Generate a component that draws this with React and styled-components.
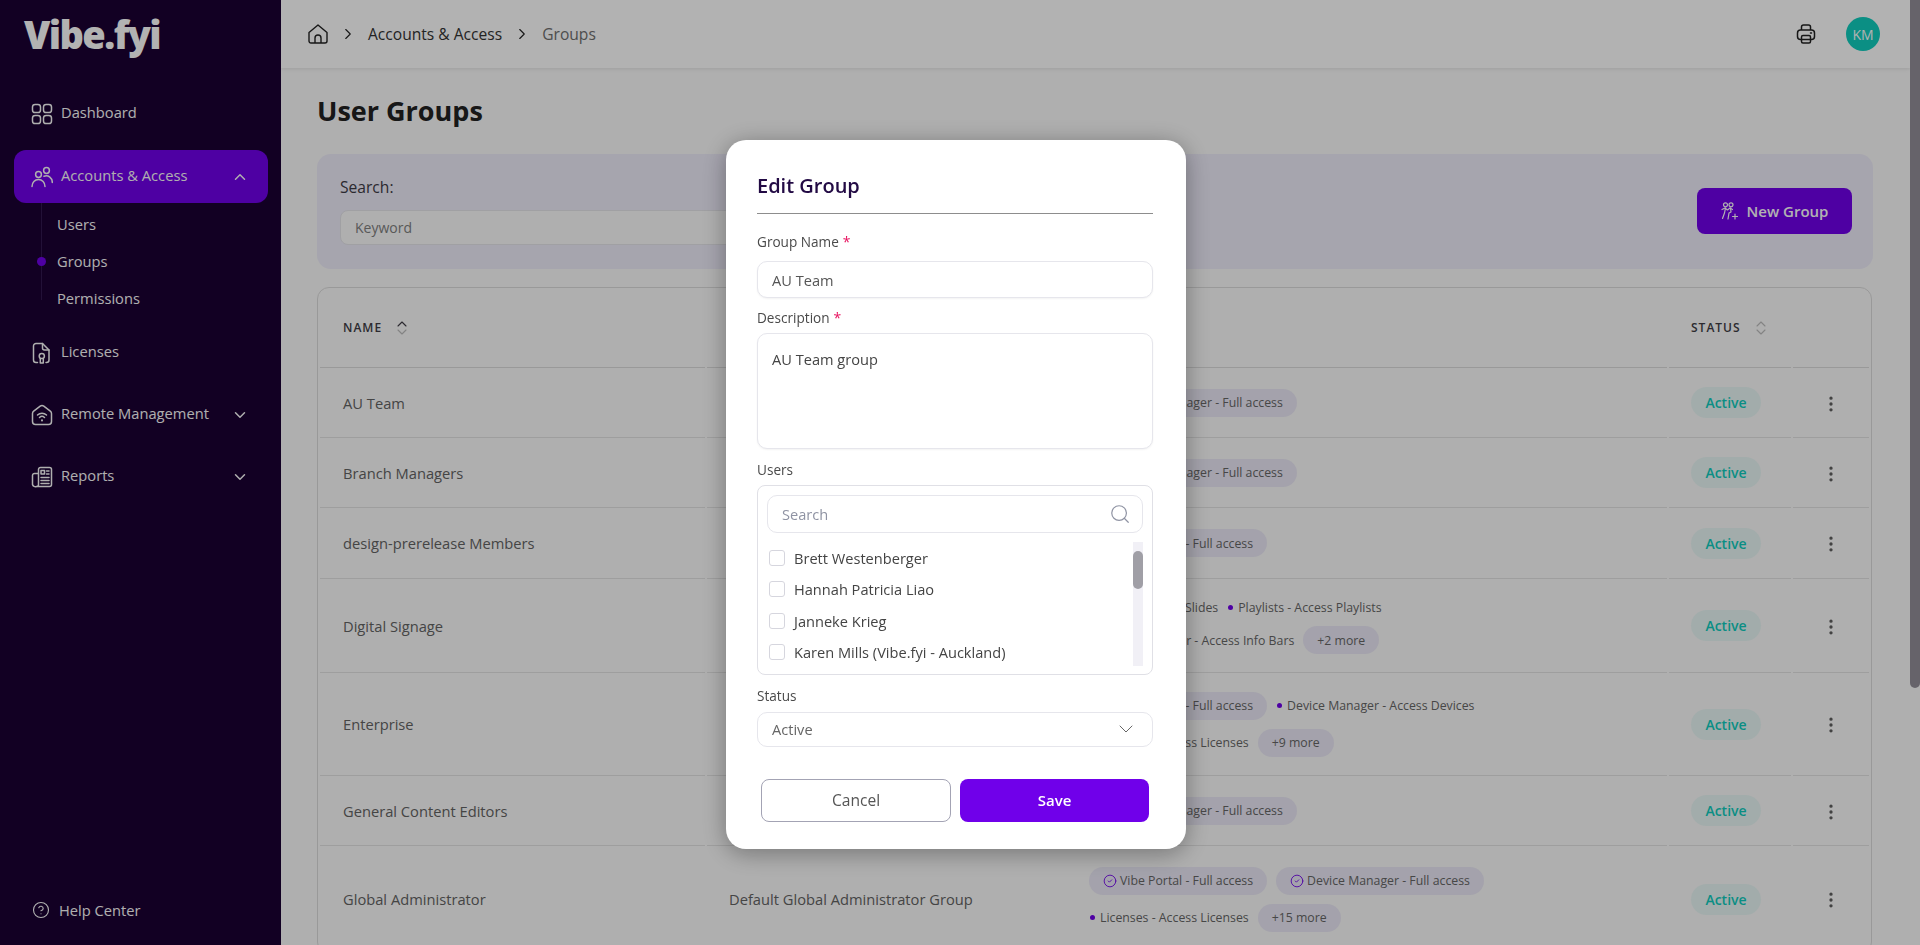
import React from 'react';
import styled, { createGlobalStyle } from 'styled-components';
import { ChevronDown, ChevronRight, ChevronUp, CircleCheck, CircleHelp, EllipsisVertical, Search } from 'lucide-react';

const GlobalStyle = createGlobalStyle`
  * { box-sizing: border-box; }
  html, body { margin: 0; height: 100%; overflow: hidden; }
  body {
    font-family: "Open Sans", "Noto Sans", sans-serif;
    font-size: 14px;
    color: #333;
    background: #fbfbfb;
  }
`;

function DashboardIcon() {
  return (
    <svg width="22" height="22" viewBox="0 0 22 22" fill="none" stroke="currentColor" strokeWidth="1.5">
      <rect x="1.5" y="1.5" width="8" height="8" rx="2.6" />
      <rect x="12.5" y="1.5" width="8" height="8" rx="2.6" />
      <rect x="1.5" y="12.5" width="8" height="8" rx="2.6" />
      <rect x="12.5" y="12.5" width="8" height="8" rx="2.6" />
    </svg>
  );
}

function PeopleIcon() {
  return (
    <svg width="22" height="22" viewBox="0 0 22 22" fill="none" stroke="currentColor" strokeWidth="1.5" strokeLinecap="round">
      <circle cx="7.5" cy="8.5" r="2.9" />
      <circle cx="15.5" cy="4.5" r="2.9" />
      <path d="M1 20.5c0-4.2 2.8-7 6.5-7s6.5 2.8 6.5 7" />
      <path d="M13 10.2c4.500-1.300 8.300 1.500 8.300 6.300" />
    </svg>
  );
}

function LicenseIcon() {
  return (
    <svg width="22" height="22" viewBox="0 0 22 22" fill="none" stroke="currentColor" strokeWidth="1.5" strokeLinecap="round" strokeLinejoin="round">
      <path d="M6.500 20.500H5a2.500 2.500 0 0 1-2.500-2.500V4A2.500 2.500 0 0 1 5 1.500h6.500l6.500 6.500v10a2.500 2.500 0 0 1-2.500 2.500H15" />
      <path d="M11.500 1.500V6A2 2 0 0 0 13.500 8H18" />
      <circle cx="10.800" cy="14" r="2.600" />
      <path d="M9.300 16.500v4.500h3v-4.500" />
    </svg>
  );
}

function RemoteIcon() {
  return (
    <svg width="22" height="22" viewBox="0 0 22 22" fill="none" stroke="currentColor" strokeWidth="1.5" strokeLinecap="round" strokeLinejoin="round">
      <path d="M1.500 9.500c0-1 .4-1.800 1.200-2.400l6.500-5a3 3 0 0 1 3.600 0l6.500 5c.8.600 1.200 1.400 1.200 2.400v8a3 3 0 0 1-3 3h-13a3 3 0 0 1-3-3z" />
      <path d="M6.500 11a6.500 6.500 0 0 1 9 0" />
      <path d="M8.500 13.500a3.600 3.600 0 0 1 5 0" />
      <path d="M11 16.300v.1" strokeWidth="2" />
    </svg>
  );
}

function ReportIcon() {
  return (
    <svg width="22" height="22" viewBox="0 0 22 22" fill="none" stroke="currentColor" strokeWidth="1.5" strokeLinecap="round" strokeLinejoin="round">
      <path d="M5.500 20.500h13a2 2 0 0 0 2-2v-15a2 2 0 0 0-2-2h-9a2 2 0 0 0-2 2v15a2 2 0 0 1-2 2 3 3 0 0 1-4-2v-9a2 2 0 0 1 2-2h4" />
      <rect x="10" y="4.500" width="3.500" height="3.500" />
      <path d="M15.500 5h2.500M15.500 8h2.500M10 11.500h8M10 14.500h8M10 17.500h8" />
    </svg>
  );
}

function HomeIcon() {
  return (
    <svg width="20" height="20" viewBox="0 0 20 20" fill="none" stroke="currentColor" strokeWidth="1.4" strokeLinejoin="round">
      <path d="M1 8.500 10 1l9 7.500V17a2 2 0 0 1-2 2H3a2 2 0 0 1-2-2z" />
      <path d="M7 19v-5a3 3 0 0 1 6 0v5" />
    </svg>
  );
}

function PrinterIcon() {
  return (
    <svg width="20" height="20" viewBox="0 0 20 20" fill="none" stroke="currentColor" strokeWidth="1.5" strokeLinejoin="round">
      <path d="M5.500 6V3a2 2 0 0 1 2-2h5a2 2 0 0 1 2 2v3" />
      <rect x="1.500" y="6" width="17" height="9.500" rx="3" />
      <rect x="5.500" y="11.500" width="9" height="7.500" rx="1.500" />
      <path d="M14.500 9h1" strokeLinecap="round" />
    </svg>
  );
}

function NewGroupIcon() {
  return (
    <svg width="18" height="18" viewBox="0 0 18 18" fill="none" stroke="currentColor" strokeWidth="1.200" strokeLinecap="round" strokeLinejoin="round">
      <circle cx="4.500" cy="2.800" r="2" />
      <circle cx="10" cy="2.800" r="2" />
      <path d="M1 7.500 4 6l2.500 2L9 6l2.500 1.500" />
      <path d="M4.500 6 3.500 11l-2 5.500M9.500 6l.5 4-2 1-1 6" />
      <path d="M14 12v5M11.500 14.500h5" />
    </svg>
  );
}

function SortIcon({ active }) {
  return (
    <SortSvg viewBox="0 0 12 16" fill="none" strokeWidth="1.100" strokeLinecap="round" strokeLinejoin="round">
      <path d="M2 6 6 2l4 4" stroke={active ? '#3f3d46' : '#bcbcbc'} />
      <path d="M2 10l4 4 4-4" stroke="#bcbcbc" />
    </SortSvg>
  );
}

const Shell = styled.div`
  display: flex;
  height: 100vh;
`;

const Sidebar = styled.aside`
  flex: 0 0 281px;
  display: flex;
  flex-direction: column;
  background: #1a0033;
  color: #fbfbfb;
  padding-bottom: 15px;
`;

const Logo = styled.div`
  height: 87px;
  padding: 9px 0 0 24px;
  font-size: 38px;
  line-height: 50px;
  font-weight: 800;
  letter-spacing: -1.600px;
  color: #fff;
`;

const Nav = styled.nav`
  display: flex;
  flex-direction: column;
  gap: 9px;
`;

const NavItem = styled.div`
  display: flex;
  align-items: center;
  gap: 8px;
  height: 53px;
  margin: 0 13px ${p => p.$after || 0}px 14px;
  padding: 0 19px 0 17px;
  border-radius: 12px;
  background: ${p => (p.$active ? '#7000ea' : 'transparent')};

  svg:last-child:not(:first-child) { margin-left: auto; }
`;

const NavLabel = styled.span`
  font-size: 14.700px;
  margin-bottom: 3px;
`;

const SubList = styled.div`
  position: relative;
  display: flex;
  flex-direction: column;
  margin-top: -9px;
  padding: 3px 0 0 57px;
  height: 114px;

  &::before {
    content: '';
    position: absolute;
    left: 41px;
    top: 0;
    width: 1px;
    height: 97px;
    background: #32194f;
  }
`;

const SubItem = styled.div`
  position: relative;
  height: 37px;
  line-height: 37px;
  font-size: 14.700px;

  ${p => p.$active && `
    &::before {
      content: '';
      position: absolute;
      left: -20px;
      top: 14px;
      width: 9px;
      height: 9px;
      border-radius: 50%;
      background: #7000ea;
    }
  `}
`;

const HelpLink = styled.div`
  display: flex;
  align-items: center;
  gap: 9px;
  margin-top: auto;
  padding-left: 32px;
  height: 40px;
  font-size: 14.700px;
`;

const Main = styled.main`
  flex: 1;
  min-width: 0;
  overflow: hidden;
  background: #fbfbfb;
`;

// headless browser hides native scrollbars, so the rails are drawn
const PageRail = styled.div`
  flex: 0 0 10px;
  background: #fbfbfb;
`;

const PageThumb = styled.div`
  height: 688px;
  border-radius: 0 0 5px 5px;
  background: #928f99;
`;

const TopBar = styled.header`
  display: flex;
  align-items: center;
  gap: 11px;
  height: 68px;
  padding: 0 30px 0 27px;
  background: #fff;
  box-shadow: 0 1px 4px rgba(0, 0, 0, 0.1);
  color: #222;
`;

const Crumb = styled.span`
  font-size: 15.600px;
  margin-bottom: 1px;
  color: ${p => (p.$current ? '#6f6f6f' : '#333')};
`;

const TopActions = styled.div`
  display: flex;
  align-items: center;
  gap: 30px;
  margin-left: auto;
`;

const Avatar = styled.div`
  display: flex;
  align-items: center;
  justify-content: center;
  width: 34px;
  height: 34px;
  border-radius: 50%;
  background: #10cdbe;
  color: #fff;
  font-size: 14px;
`;

const Content = styled.div`
  padding: 25px 37px 0 36px;
`;

const Title = styled.h1`
  margin: 0 0 25px;
  font-size: 27px;
  line-height: 36px;
  font-weight: 700;
  color: #222;
`;

const FilterPanel = styled.section`
  display: flex;
  align-items: center;
  justify-content: space-between;
  height: 115px;
  padding: 0 21px 2px 23px;
  border-radius: 14px;
  background: #eeecfa;
`;

const FilterLabel = styled.div`
  font-size: 15.600px;
  line-height: 20px;
  margin-bottom: 13px;
  color: #3d3b45;
`;

const FilterInput = styled.input`
  display: block;
  width: 660px;
  height: 35px;
  padding: 0 14px;
  border: 1px solid #e5e5ea;
  border-radius: 8px;
  background: #fbfbfb;
  font: inherit;
  &::placeholder { color: #808080; }
`;

const PrimaryButton = styled.button`
  display: flex;
  align-items: center;
  justify-content: center;
  gap: 8px;
  width: 155px;
  height: 46px;
  border: 0;
  border-radius: 8px;
  background: #7000ea;
  color: #fff;
  font: 600 15px "Open Sans", sans-serif;
`;

const TableCard = styled.section`
  margin: 18px 1px 0 0;
  border: 1px solid #dcdcdc;
  border-radius: 12px;
  overflow: hidden;
`;

const Table = styled.table`
  width: 100%;
  table-layout: fixed;
  border-collapse: separate;
  border-spacing: 2px 0;
`;

const HeadCell = styled.th`
  height: 80px;
  padding: 0 0 0 ${p => p.$pad || 22}px;
  border-bottom: 1px solid #dcdcdc;
  text-align: left;
  font-size: 12px;
  font-weight: 600;
  letter-spacing: 1px;
  color: #3f3d46;
`;

const SortSvg = styled.svg`
  width: 12px;
  height: 16px;
  margin-left: 14px;
  vertical-align: -4px;
`;

const Cell = styled.td`
  height: ${p => p.$h}px;
  padding: 0 0 0 ${p => p.$pad ?? 22}px;
  border-bottom: 1px solid #e3e3e3;
  font-size: 14.700px;
  color: #636363;
  text-align: ${p => (p.$center ? 'center' : 'left')};
`;

const ChipStack = styled.div`
  display: flex;
  flex-direction: column;
  gap: 9px;
`;

const ChipLine = styled.div`
  display: flex;
  align-items: center;
  gap: 9px;
`;

const Chip = styled.span`
  display: inline-flex;
  align-items: center;
  gap: 3px;
  height: 28px;
  padding: 0 14px;
  border-radius: 14px;
  background: #ebe9f6;
  font-size: 12.300px;
  color: #666;
  white-space: nowrap;
  svg { color: #7000ea; }
`;

const PlainPerm = styled.span`
  display: inline-flex;
  align-items: center;
  gap: 5px;
  height: 20px;
  padding-left: 1px;
  font-size: 12.300px;
  color: #666;
  white-space: nowrap;

  &::before {
    content: '';
    width: 5px;
    height: 5px;
    border-radius: 50%;
    background: #7000ea;
  }
`;

const StatusChip = styled.span`
  display: inline-flex;
  align-items: center;
  justify-content: center;
  vertical-align: middle;
  width: 70px;
  height: 31px;
  border-radius: 16px;
  background: #e9f7f5;
  color: #0fccbe;
  font-size: 14px;
  font-weight: 600;
`;

const RowMenu = styled.span`
  display: inline-flex;
  vertical-align: middle;
  color: #5f5f5f;
`;

const Backdrop = styled.div`
  position: fixed;
  inset: 0;
  display: flex;
  justify-content: center;
  align-items: flex-start;
  padding: 140px 8px 0 0;
  background: rgba(0, 0, 0, 0.3);
`;

const Modal = styled.form`
  width: 460px;
  height: 709px;
  padding: 31px 33px 0 31px;
  border-radius: 20px;
  background: #fff;
  box-shadow: 0 4px 24px rgba(0, 0, 0, 0.35);
`;

const ModalTitle = styled.h2`
  margin: 0;
  padding-bottom: 12px;
  border-bottom: 1px solid #8d8d8d;
  font-size: 20px;
  line-height: 30px;
  font-weight: 600;
  color: #220a44;
`;

const Label = styled.label`
  display: block;
  font-size: 13.600px;
  line-height: 20px;
  color: #4a4a4a;
  margin: ${p => p.$top}px 0 ${p => p.$bottom}px;
`;

const Required = styled.span`
  color: #e8125f;
  margin-left: 4px;
  font-size: 14px;
`;

const TextInput = styled.input`
  display: block;
  width: 100%;
  height: 37px;
  padding: 0 14px;
  border: 1px solid #e6e6ec;
  border-radius: 10px;
  box-shadow: 0 1px 2px rgba(0, 0, 0, 0.05);
  font: 14.600px "Open Sans", sans-serif;
  color: #555;
  outline: none;
`;

const TextArea = styled.textarea`
  display: block;
  width: 100%;
  height: 116px;
  padding: 15px 14px;
  border: 1px solid #e6e6ec;
  border-radius: 10px;
  box-shadow: 0 1px 2px rgba(0, 0, 0, 0.05);
  font: 14.600px/20px "Open Sans", sans-serif;
  color: #444;
  resize: none;
  outline: none;
`;

const UserBox = styled.div`
  height: 190px;
  padding: 9px;
  border: 1px solid #e0e0e6;
  border-radius: 8px;
`;

const SearchField = styled.div`
  display: flex;
  align-items: center;
  justify-content: space-between;
  height: 38px;
  padding: 0 11px 1px 14px;
  border: 1px solid #e6e6ec;
  border-radius: 10px;
  color: #8f93a3;
  font-size: 14.600px;
`;

const UserPicker = styled.div`
  display: flex;
  height: 124px;
  margin-top: 9px;
`;

const UserList = styled.div`
  flex: 1;
  min-width: 0;
  overflow: hidden;
`;

const ListRail = styled.div`
  flex: 0 0 10px;
  padding-top: 9px;
  background: #f1f0f6;
`;

const ListThumb = styled.div`
  height: 38px;
  border-radius: 5px;
  background: #a09fa6;
`;

const UserRow = styled.div`
  display: flex;
  align-items: center;
  gap: 9px;
  height: 31.500px;
  padding-left: 2px;
  font-size: 14.600px;
  color: #444;
`;

const Check = styled.span`
  flex: none;
  width: 16px;
  height: 16px;
  border: 1px solid #d6d6de;
  border-radius: 3px;
`;

const SelectBox = styled.div`
  display: flex;
  align-items: center;
  justify-content: space-between;
  height: 35px;
  padding: 0 14px 1px 14px;
  border: 1px solid #e6e6ec;
  border-radius: 10px;
  font-size: 14.600px;
  color: #666;
`;

const ButtonRow = styled.div`
  display: flex;
  justify-content: space-between;
  padding: 0 4px;
  margin-top: 32px;
`;

const CancelButton = styled.button`
  width: 190px;
  height: 43px;
  padding: 0 0 2px;
  border: 1px solid #a3a3b4;
  border-radius: 8px;
  background: #fff;
  color: #555;
  font: 15.600px "Open Sans", sans-serif;
`;

const SaveButton = styled.button`
  width: 189px;
  height: 43px;
  padding: 0 0 2px;
  border: 0;
  border-radius: 8px;
  background: #7000ea;
  color: #fff;
  font: 600 15px "Open Sans", sans-serif;
`;

const full = (text) => ({ kind: 'full', text });
const plain = (text) => ({ kind: 'plain', text });
const more = (text) => ({ kind: 'more', text });

const groups = [
  { name: 'AU Team', desc: 'AU Team group', h: 70, lines: [[full('Device Manager - Full access')]] },
  { name: 'Branch Managers', desc: 'Branch Managers group', h: 70, lines: [[full('Device Manager - Full access')]] },
  { name: 'design-prerelease Members', desc: 'Design prerelease', h: 71, lines: [[full('Vibe Portal - Full access')]] },
  {
    name: 'Digital Signage', desc: 'Digital signage users', h: 94,
    lines: [
      [plain('Slides - Access Slides'), plain('Playlists - Access Playlists')],
      [plain('Information Bar - Access Info Bars'), more('+2 more')],
    ],
  },
  {
    name: 'Enterprise', desc: 'Enterprise users', h: 103,
    lines: [
      [full('Vibe Portal - Full access'), plain('Device Manager - Access Devices')],
      [plain('Licenses - Access Licenses'), more('+9 more')],
    ],
  },
  { name: 'General Content Editors', desc: 'Content editors', h: 70, lines: [[full('Device Manager - Full access')]] },
  {
    name: 'Global Administrator', desc: 'Default Global Administrator Group', h: 107,
    lines: [
      [full('Vibe Portal - Full access'), full('Device Manager - Full access')],
      [plain('Licenses - Access Licenses'), more('+15 more')],
    ],
  },
];

const users = [
  'Brett Westenberger',
  'Hannah Patricia Liao',
  'Janneke Krieg',
  'Karen Mills (Vibe.fyi - Auckland)',
];

function Permission({ item }) {
  if (item.kind === 'plain') return <PlainPerm>{item.text}</PlainPerm>;
  return (
    <Chip>
      {item.kind === 'full' && <CircleCheck size={14} strokeWidth={1.5} />}
      {item.text}
    </Chip>
  );
}

export default function App() {
  return (
    <>
      <GlobalStyle />
      <Shell>
        <Sidebar>
          <Logo>Vibe.fyi</Logo>
          <Nav>
            <NavItem $after={1}><DashboardIcon /><NavLabel>Dashboard</NavLabel></NavItem>
            <NavItem $active><PeopleIcon /><NavLabel>Accounts &amp; Access</NavLabel><ChevronUp size={18} /></NavItem>
            <SubList>
              <SubItem>Users</SubItem>
              <SubItem $active>Groups</SubItem>
              <SubItem>Permissions</SubItem>
            </SubList>
            <NavItem><LicenseIcon /><NavLabel>Licenses</NavLabel></NavItem>
            <NavItem><RemoteIcon /><NavLabel>Remote Management</NavLabel><ChevronDown size={18} /></NavItem>
            <NavItem><ReportIcon /><NavLabel>Reports</NavLabel><ChevronDown size={18} /></NavItem>
          </Nav>
          <HelpLink><CircleHelp size={18} strokeWidth={1.5} />Help Center</HelpLink>
        </Sidebar>

        <Main>
          <TopBar>
            <HomeIcon />
            <ChevronRight size={18} strokeWidth={1.5} />
            <Crumb>Accounts &amp; Access</Crumb>
            <ChevronRight size={18} strokeWidth={1.5} />
            <Crumb $current>Groups</Crumb>
            <TopActions>
              <PrinterIcon />
              <Avatar>KM</Avatar>
            </TopActions>
          </TopBar>

          <Content>
            <Title>User Groups</Title>
            <FilterPanel>
              <div>
                <FilterLabel>Search:</FilterLabel>
                <FilterInput placeholder="Keyword" />
              </div>
              <PrimaryButton type="button"><NewGroupIcon />New Group</PrimaryButton>
            </FilterPanel>

            <TableCard>
              <Table>
                <colgroup>
                  <col />
                  <col style={{ width: 358 }} />
                  <col style={{ width: 600 }} />
                  <col style={{ width: 122 }} />
                  <col style={{ width: 76 }} />
                </colgroup>
                <thead>
                  <tr>
                    <HeadCell $pad={23}>NAME<SortIcon active /></HeadCell>
                    <HeadCell>DESCRIPTION</HeadCell>
                    <HeadCell>PERMISSIONS</HeadCell>
                    <HeadCell>STATUS<SortIcon /></HeadCell>
                    <HeadCell />
                  </tr>
                </thead>
                <tbody>
                  {groups.map((group) => (
                    <tr key={group.name}>
                      <Cell $h={group.h} $pad={23}>{group.name}</Cell>
                      <Cell $h={group.h}>{group.desc}</Cell>
                      <Cell $h={group.h}>
                        <ChipStack>
                          {group.lines.map((line, i) => (
                            <ChipLine key={i}>
                              {line.map((item) => <Permission key={item.text} item={item} />)}
                            </ChipLine>
                          ))}
                        </ChipStack>
                      </Cell>
                      <Cell $h={group.h}><StatusChip>Active</StatusChip></Cell>
                      <Cell $h={group.h} $pad={0} $center>
                        <RowMenu><EllipsisVertical size={20} /></RowMenu>
                      </Cell>
                    </tr>
                  ))}
                </tbody>
              </Table>
            </TableCard>
          </Content>
        </Main>
        <PageRail><PageThumb /></PageRail>
      </Shell>

      <Backdrop>
        <Modal onSubmit={(e) => e.preventDefault()}>
          <ModalTitle>Edit Group</ModalTitle>
          <Label $top={18} $bottom={9}>Group Name<Required>*</Required></Label>
          <TextInput defaultValue="AU Team" />
          <Label $top={10} $bottom={5}>Description<Required>*</Required></Label>
          <TextArea defaultValue="AU Team group" />
          <Label $top={11} $bottom={5}>Users</Label>
          <UserBox>
            <SearchField>Search<Search size={22} strokeWidth={1.3} /></SearchField>
            <UserPicker>
              <UserList>
                {users.map((user) => (
                  <UserRow key={user}><Check />{user}</UserRow>
                ))}
              </UserList>
              <ListRail><ListThumb /></ListRail>
            </UserPicker>
          </UserBox>
          <Label $top={11} $bottom={6}>Status</Label>
          <SelectBox>Active<ChevronDown size={24} strokeWidth={1} /></SelectBox>
          <ButtonRow>
            <CancelButton type="button">Cancel</CancelButton>
            <SaveButton type="submit">Save</SaveButton>
          </ButtonRow>
        </Modal>
      </Backdrop>
    </>
  );
}
